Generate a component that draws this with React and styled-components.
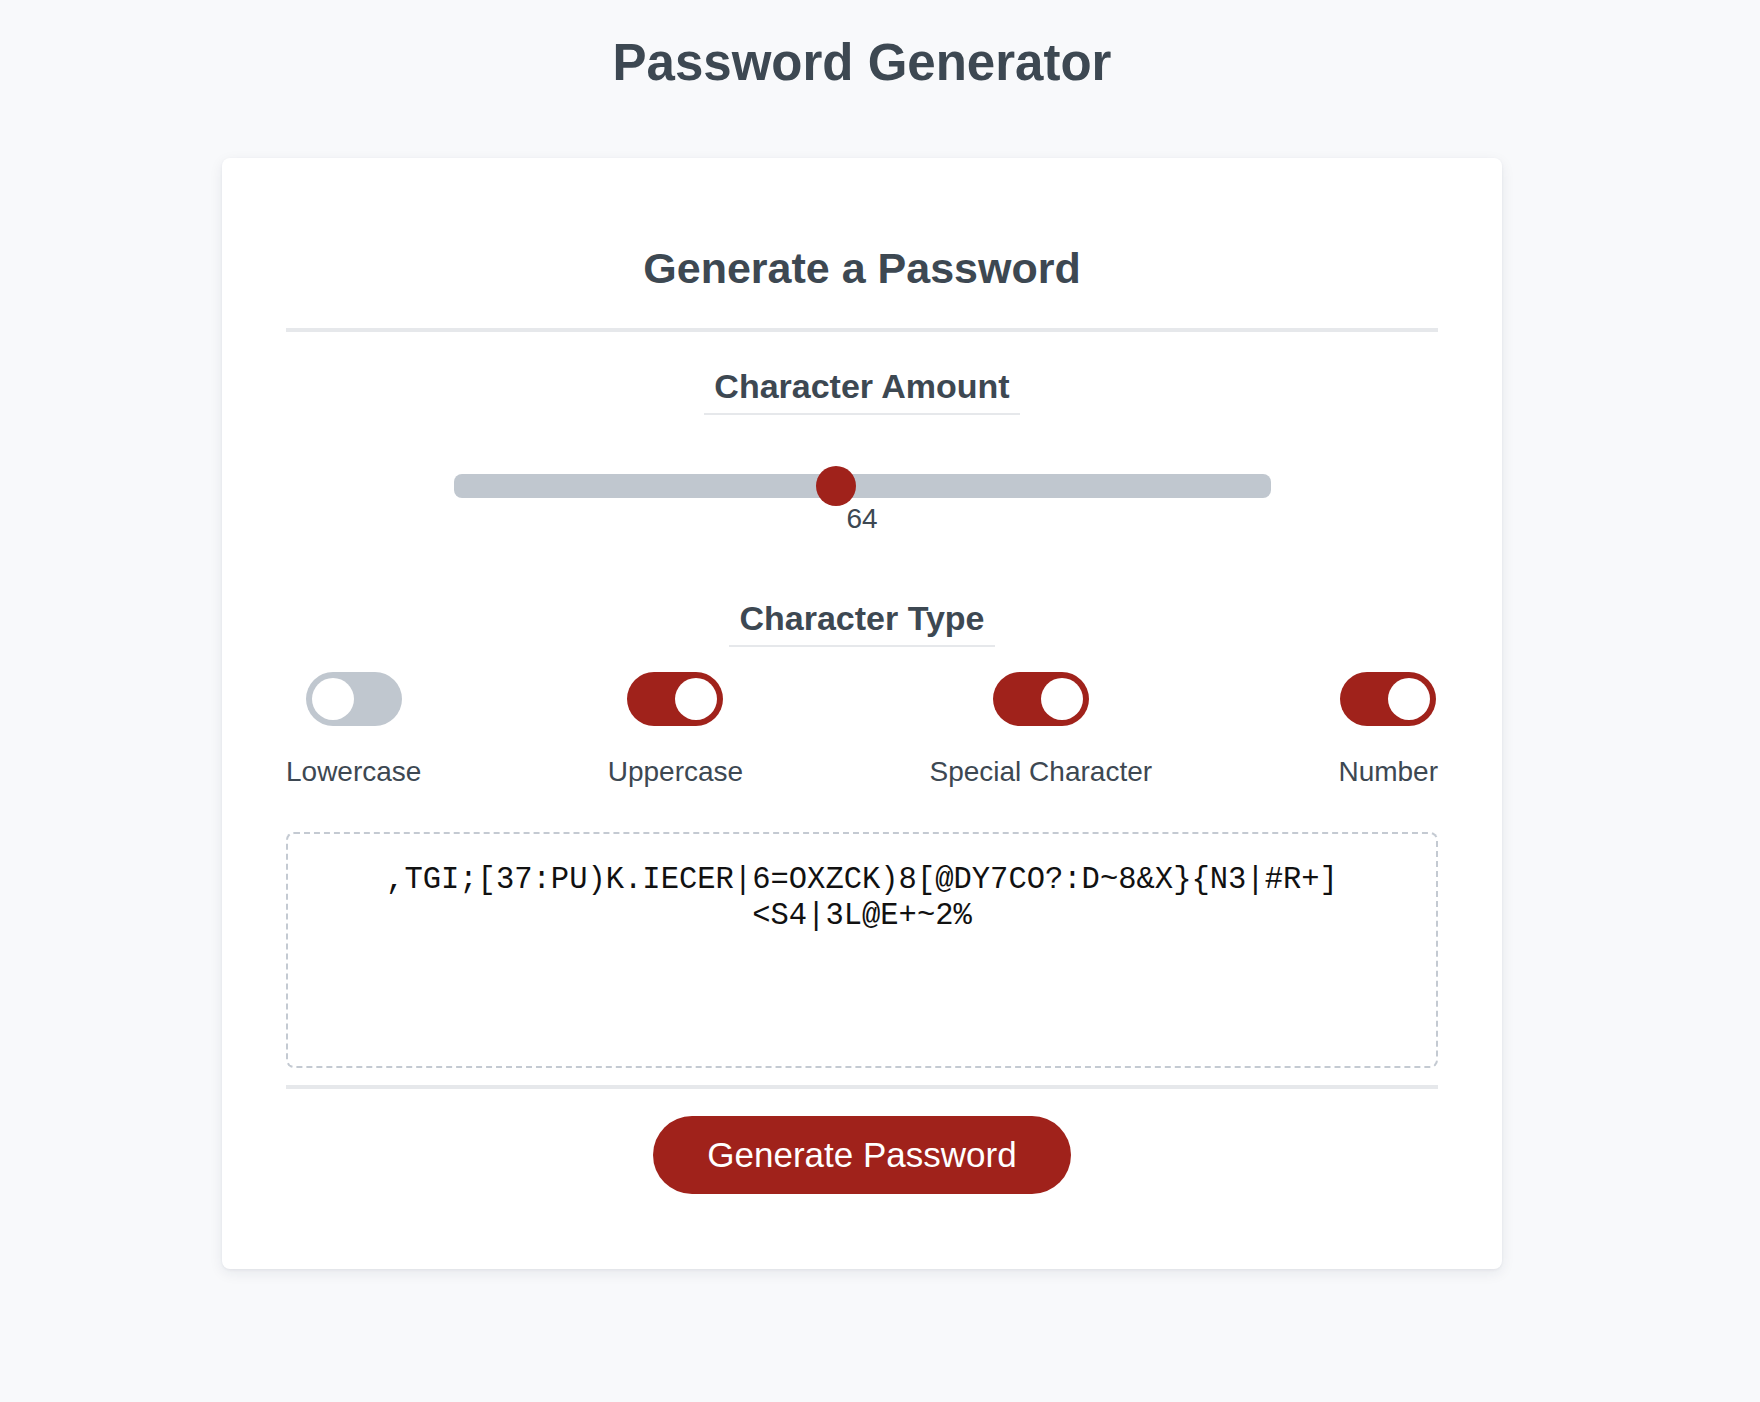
import React, { useState } from 'react';
import styled, { createGlobalStyle } from 'styled-components';

const GlobalStyle = createGlobalStyle`
  body {
    margin: 0;
    background: #f8f9fb;
    font-family: 'Liberation Sans', Arial, sans-serif;
    color: #3d4852;
  }
`

const types = [
  { id: 'lower', label: 'Lowercase', on: false },
  { id: 'upper', label: 'Uppercase', on: true },
  { id: 'special', label: 'Special Character', on: true },
  { id: 'number', label: 'Number', on: true },
]

export default function App() {
  const [amount, setAmount] = useState(64);
  const [toggles, setToggles] = useState(types);
  const password = ',TGI;[37:PU)K.IECER|6=OXZCK)8[@DY7CO?:D~8&X}{N3|#R+]<S4|3L@E+~2%';

  const flip = (id) => {
    setToggles(toggles.map((t) => (t.id === id ? { ...t, on: !t.on } : t)));
  }

  return (
    <Page>
      <GlobalStyle />
      <Title>Password Generator</Title>
      <Card>
        <CardTitle>Generate a Password</CardTitle>
        <Divider $gap="36px" />

        <Section>
          <SectionTitle>Character Amount</SectionTitle>
          <Range
            min={8}
            max={128}
            value={amount}
            onChange={(e) => setAmount(Number(e.target.value))}
          />
          <AmountValue>{amount}</AmountValue>
        </Section>

        <Section $top="66px">
          <SectionTitle>Character Type</SectionTitle>
          <TypeRow>
            {toggles.map((t) => (
              <TypeItem key={t.id}>
                <Switch $on={t.on} onClick={() => flip(t.id)} aria-pressed={t.on} />
                <TypeLabel>{t.label}</TypeLabel>
              </TypeItem>
            ))}
          </TypeRow>
        </Section>

        <Output>{password}</Output>
        <Divider $gap="17px" $after="27px" />

        <GenerateButton>Generate Password</GenerateButton>
      </Card>
    </Page>
  )
}

const Page = styled.div`
  width: 1724px;
  padding: 34px 0 132px;
  display: flex;
  flex-direction: column;
  align-items: center;
`
const Title = styled.h1`
  margin: 0 0 66px;
  font-size: 51px;
  line-height: 58px;
  font-weight: 700;
  color: #3d4852;
`
const Card = styled.div`
  box-sizing: border-box;
  width: 1280px;
  padding: 86px 64px 75px;
  background: #ffffff;
  border-radius: 8px;
  box-shadow: 0 4px 14px rgba(30, 40, 60, 0.08), 0 1px 3px rgba(30, 40, 60, 0.06);
  display: flex;
  flex-direction: column;
  align-items: center;
`
const CardTitle = styled.h2`
  margin: 0;
  font-size: 43px;
  line-height: 48px;
  font-weight: 700;
`
const Divider = styled.div`
  align-self: stretch;
  height: 4px;
  background: #e6e8eb;
  margin-top: ${(p) => p.$gap};
  margin-bottom: ${(p) => p.$after || '36px'};
`
const Section = styled.div`
  align-self: stretch;
  display: flex;
  flex-direction: column;
  align-items: center;
  margin-top: ${(p) => p.$top || '0'};
`
const SectionTitle = styled.h3`
  margin: 0;
  padding: 0 10px 8px;
  font-size: 34px;
  line-height: 37px;
  font-weight: 700;
  border-bottom: 2px solid #e6e8eb;
`
const Range = styled.input.attrs({ type: 'range' })`
  -webkit-appearance: none;
  appearance: none;
  width: 817px;
  height: 40px;
  margin: 51px 0 0;
  background: transparent;
  outline: none;

  &::-webkit-slider-runnable-track {
    height: 24px;
    background: #c0c7cf;
    border-radius: 8px;
  }
  &::-webkit-slider-thumb {
    -webkit-appearance: none;
    width: 40px;
    height: 40px;
    margin-top: -8px;
    border: none;
    border-radius: 50%;
    background: #a0221b;
    cursor: pointer;
  }
`
const AmountValue = styled.div`
  margin-top: -3px;
  font-size: 28px;
  line-height: 31px;
`
const TypeRow = styled.div`
  align-self: stretch;
  display: flex;
  justify-content: space-between;
  margin-top: 25px;
`
const TypeItem = styled.div`
  display: flex;
  flex-direction: column;
  align-items: center;
  gap: 30px;
`
const Switch = styled.button`
  position: relative;
  width: 96px;
  height: 54px;
  padding: 0;
  border: none;
  border-radius: 27px;
  background: ${(p) => (p.$on ? '#a0221b' : '#c0c7cf')};
  cursor: pointer;

  &::after {
    content: '';
    position: absolute;
    top: 6px;
    left: ${(p) => (p.$on ? '48px' : '6px')};
    width: 42px;
    height: 42px;
    border-radius: 50%;
    background: #ffffff;
  }
`
const TypeLabel = styled.span`
  font-size: 28px;
  line-height: 31px;
`
const Output = styled.div`
  box-sizing: border-box;
  align-self: stretch;
  height: 236px;
  margin-top: 45px;
  padding: 28px 92px;
  border: 2px dashed #c4cad2;
  border-radius: 8px;
  font-family: 'Liberation Mono', 'Courier New', monospace;
  font-size: 30.5px;
  line-height: 36px;
  text-align: center;
  word-break: break-all;
  color: #111111;
`
const GenerateButton = styled.button`
  height: 78px;
  padding: 0 54px;
  border: none;
  border-radius: 39px;
  background: #a0221b;
  color: #ffffff;
  font-family: 'Liberation Sans', Arial, sans-serif;
  font-size: 35px;
  cursor: pointer;
`
